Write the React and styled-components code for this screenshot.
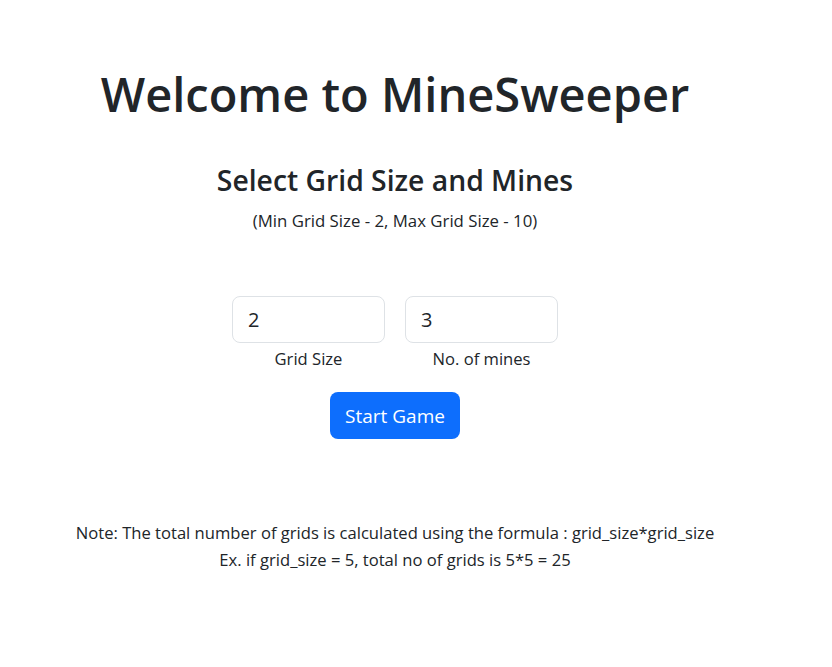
import React from "react"
import styled, { createGlobalStyle } from "styled-components"

const GlobalStyle = createGlobalStyle`
  body {
    margin: 0;
    background: #fff;
    color: #212529;
    font-family: "Open Sans", "Noto Sans", sans-serif;
    font-size: 16.6px;
    line-height: 1.5;
  }
`

const Page = styled.div`
  width: 790px;
  display: flex;
  flex-direction: column;
  align-items: center;
  text-align: center;
`

const Title = styled.h1`
  margin: 66px 0 0;
  font-size: 47px;
  font-weight: 600;
  line-height: 1.2;
`

const SubTitle = styled.h3`
  margin: 42px 0 0;
  font-size: 28.3px;
  font-weight: 600;
  line-height: 1.2;
`

const Hint = styled.p`
  margin: 10px 0 0;
  font-size: 16.8px;
`

const Fields = styled.div`
  margin-top: 62px;
  display: flex;
  gap: 20px;
`

const Field = styled.div`
  display: flex;
  flex-direction: column;
  align-items: center;
  width: 153px;
`

const Input = styled.input`
  box-sizing: border-box;
  width: 100%;
  height: 47px;
  padding: 8px 15px;
  font: inherit;
  font-size: 20px;
  color: #212529;
  border: 1px solid #dee2e6;
  border-radius: 8px;
  outline: none;
`

const Label = styled.label`
  margin-top: 4px;
  font-size: 16.6px;
`

const Button = styled.button`
  margin-top: 21px;
  width: 130px;
  height: 47px;
  font: inherit;
  font-size: 19px;
  color: #fff;
  background: #0d6efd;
  border: none;
  border-radius: 8px;
`

const Note = styled.div`
  margin-top: 80px;
  line-height: 27px;
`

const App = () => (
  <>
    <GlobalStyle />
    <Page>
      <Title>Welcome to MineSweeper</Title>
      <SubTitle>Select Grid Size and Mines</SubTitle>
      <Hint>(Min Grid Size - 2, Max Grid Size - 10)</Hint>
      <Fields>
        <Field>
          <Input defaultValue="2" />
          <Label>Grid Size</Label>
        </Field>
        <Field>
          <Input defaultValue="3" />
          <Label>No. of mines</Label>
        </Field>
      </Fields>
      <Button>Start Game</Button>
      <Note>
        <div>Note: The total number of grids is calculated using the formula : grid_size*grid_size</div>
        <div>Ex. if grid_size = 5, total no of grids is 5*5 = 25</div>
      </Note>
    </Page>
  </>
)

export default App
